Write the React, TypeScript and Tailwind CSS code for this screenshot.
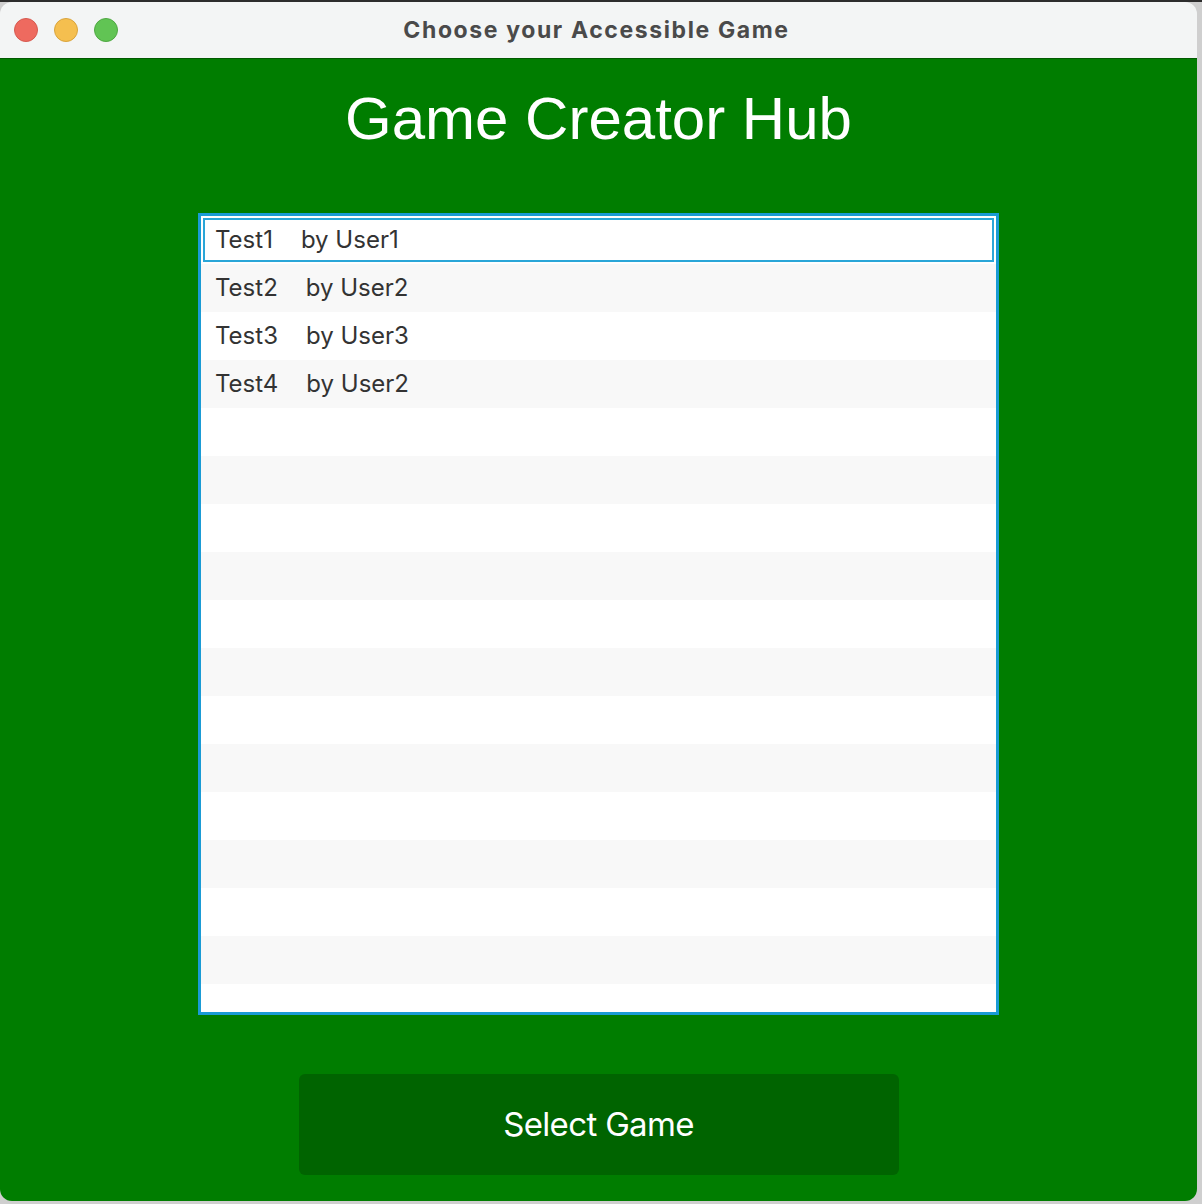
const games = [
  { name: "Test1", author: "User1" },
  { name: "Test2", author: "User2" },
  { name: "Test3", author: "User3" },
  { name: "Test4", author: "User2" },
];

const ROW_COUNT = 17;

function TrafficLights() {
  return (
    <div className="absolute left-[14px] top-1/2 -translate-y-1/2 flex gap-4">
      <span className="w-6 h-6 rounded-full bg-[#ee6a5f] border border-[#d65a50]" />
      <span className="w-6 h-6 rounded-full bg-[#f5bf4f] border border-[#d9a43d]" />
      <span className="w-6 h-6 rounded-full bg-[#61c454] border border-[#4fa843]" />
    </div>
  );
}

function GameList() {
  const rows = Array.from({ length: ROW_COUNT }, (_, i) => games[i]);

  return (
    <div className="w-[801px] h-[802px] border-[3px] border-[#1a9bd5] bg-white overflow-hidden">
      {rows.map((game, index) => (
        <div
          key={index}
          className={`h-12 shrink-0 flex items-center pl-[14px] text-[24px] text-[#333] ${
            index % 2 === 1 ? "bg-[#f8f8f8]" : "bg-white"
          } ${
            index === 0
              ? "shadow-[inset_0_0_0_2px_#fff,inset_0_0_0_4px_#2aa6d8]"
              : ""
          }`}
          style={{ fontFamily: "Inter, 'Noto Sans', sans-serif" }}>
          {game && (
            <>
              <span>{game.name}</span>
              <span className="ml-[28px]">by {game.author}</span>
            </>
          )}
        </div>
      ))}
    </div>
  );
}

export default function App() {
  return (
    <div className="w-[1202px] h-[1204px] bg-[#cfcfcf] border-t-2 border-[#2d2d2d] pr-[5px] pb-[3px]">
      <div className="w-[1197px] h-[1199px] rounded-[12px] overflow-hidden flex flex-col">
        <div className="relative h-[56px] shrink-0 bg-[#f3f5f5] flex items-center justify-center">
          <TrafficLights />
          <span
            className="ml-[-4px] text-[23px] font-bold tracking-[0.07em] text-[#4a4a4a]"
            style={{ fontFamily: "Inter, 'Noto Sans', sans-serif" }}>
            Choose your Accessible Game
          </span>
        </div>
        <div className="flex-1 bg-[#007d00] border-t border-[#005a00] flex flex-col items-center">
          <h1
            className="mt-[30px] text-[60px] leading-[60px] text-white"
            style={{ fontFamily: "'Liberation Sans', Arial, sans-serif" }}>
            Game Creator Hub
          </h1>
          <div className="mt-[64px]">
            <GameList />
          </div>
          <button
            className="mt-[59px] w-[600px] h-[101px] rounded-[6px] bg-[#006400] text-white text-[33px] tracking-[-0.02em]"
            style={{ fontFamily: "Inter, 'Noto Sans', sans-serif" }}>
            Select Game
          </button>
        </div>
      </div>
    </div>
  );
}
